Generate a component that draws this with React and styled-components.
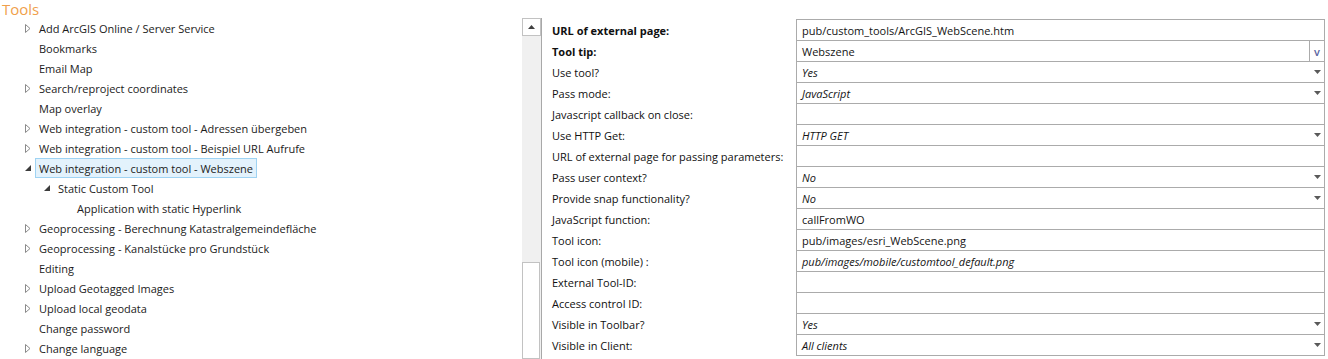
import React from "react";
import styled, { createGlobalStyle } from "styled-components";

const GlobalStyle = createGlobalStyle`
  html, body {
    margin: 0;
    padding: 0;
    background: #ffffff;
  }

  body {
    font-family: "Segoe UI", "Open Sans", "Noto Sans", sans-serif;
    font-size: 11px;
    color: #1b1b1b;
  }
`;

const Page = styled.div`
  width: 1328px;
  height: 359px;
  overflow: hidden;

  display: flex;
  flex-direction: column;
`;

const Title = styled.div`
  height: 18px;
  padding-left: 2px;

  font-size: 15px;
  line-height: 18px;
  color: #f0a04b;
`;

const Body = styled.div`
  flex: 1;

  display: flex;
  min-height: 0;
`;

const TreePane = styled.div`
  width: 522px;

  display: flex;
  flex-direction: column;
`;

const TreeRow = styled.div`
  height: 20px;
  padding-left: ${(p) => 20 + p.$level * 19}px;

  display: flex;
  align-items: center;
`;

const Expander = styled.span`
  width: 15px;
  height: 20px;

  display: flex;
  align-items: center;
  justify-content: flex-start;
  padding-left: 5px;
  box-sizing: border-box;
`;

const TreeLabel = styled.span`
  height: 18px;
  padding: 0 3px;

  display: flex;
  align-items: center;

  border: 1px solid ${(p) => (p.$selected ? "#9fd3f3" : "transparent")};
  background-color: ${(p) => (p.$selected ? "#e3f2fc" : "transparent")};

  white-space: nowrap;
`;

const ScrollBar = styled.div`
  width: 19px;
  border-right: 1px solid #a8a8a8;

  display: flex;
  flex-direction: column;
`;

const ScrollButton = styled.div`
  height: 18px;
  box-sizing: border-box;

  border: 1px solid #c2c2c2;
  background-color: #ffffff;

  display: flex;
  align-items: center;
  justify-content: center;
`;

const ScrollTrack = styled.div`
  flex: 1;

  display: flex;
  flex-direction: column;

  background-color: #f0f0f0;
`;

const ScrollThumb = styled.div`
  flex: 1;
  margin-top: 226px;
  margin-right: 1px;

  border: 1px solid #c2c2c2;
  background-color: #ffffff;
`;

const Grid = styled.div`
  flex: 1;
  padding-top: 1px;
  padding-right: 3px;

  display: grid;
  grid-template-columns: 254px 1fr;
  align-content: start;
`;

const Label = styled.div`
  height: ${(p) => (p.$first ? 22 : 21)}px;
  padding-left: 10px;

  display: flex;
  align-items: center;

  font-weight: ${(p) => (p.$bold ? 700 : 400)};
  color: #101010;
  white-space: nowrap;
`;

const Value = styled.div`
  height: ${(p) => (p.$first ? 22 : 21)}px;
  box-sizing: border-box;

  display: flex;
  align-items: stretch;

  border: 1px solid #ababab;
  border-top-width: ${(p) => (p.$first ? 1 : 0)}px;
`;

const ValueText = styled.span`
  flex: 1;
  padding-left: 5px;

  display: flex;
  align-items: center;

  font-style: ${(p) => (p.$italic ? "italic" : "normal")};
  color: #141414;
  white-space: nowrap;
`;

const DropArrow = styled.span`
  width: 14px;

  display: flex;
  align-items: center;
  justify-content: center;
`;

const VButton = styled.span`
  width: 14px;
  border-left: 1px solid #ababab;

  display: flex;
  align-items: center;
  justify-content: center;

  font-size: 11px;
  font-weight: 600;
  color: #5a64a0;
`;

const Collapsed = () => (
  <svg width="6" height="9" viewBox="0 0 6 9">
    <path d="M0.5 0.5 L5 4.5 L0.5 8.5 Z" fill="none" stroke="#8a8a8a" strokeWidth="1" />
  </svg>
);

const Expanded = () => (
  <svg width="6" height="6" viewBox="0 0 6 6">
    <path d="M6 0 L6 6 L0 6 Z" fill="#3c3c3c" />
  </svg>
);

const Caret = () => (
  <svg width="7" height="4" viewBox="0 0 7 4">
    <path d="M0 0 L7 0 L3.5 4 Z" fill="#5a5a5a" />
  </svg>
);

const UpArrow = () => (
  <svg width="7" height="4" viewBox="0 0 7 4">
    <path d="M0 4 L7 4 L3.5 0 Z" fill="#404040" />
  </svg>
);

const treeItems = [
  { label: "Add ArcGIS Online / Server Service", level: 0, state: "closed" },
  { label: "Bookmarks", level: 0 },
  { label: "Email Map", level: 0 },
  { label: "Search/reproject coordinates", level: 0, state: "closed" },
  { label: "Map overlay", level: 0 },
  { label: "Web integration - custom tool - Adressen übergeben", level: 0, state: "closed" },
  { label: "Web integration - custom tool - Beispiel URL Aufrufe", level: 0, state: "closed" },
  { label: "Web integration - custom tool - Webszene", level: 0, state: "open", selected: true },
  { label: "Static Custom Tool", level: 1, state: "open" },
  { label: "Application with static Hyperlink", level: 2 },
  { label: "Geoprocessing - Berechnung Katastralgemeindefläche", level: 0, state: "closed" },
  { label: "Geoprocessing - Kanalstücke pro Grundstück", level: 0, state: "closed" },
  { label: "Editing", level: 0 },
  { label: "Upload Geotagged Images", level: 0, state: "closed" },
  { label: "Upload local geodata", level: 0, state: "closed" },
  { label: "Change password", level: 0 },
  { label: "Change language", level: 0, state: "closed" },
];

const properties = [
  { label: "URL of external page:", value: "pub/custom_tools/ArcGIS_WebScene.htm", bold: true },
  { label: "Tool tip:", value: "Webszene", bold: true, editor: "v" },
  { label: "Use tool?", value: "Yes", italic: true, editor: "drop" },
  { label: "Pass mode:", value: "JavaScript", italic: true, editor: "drop" },
  { label: "Javascript callback on close:", value: "" },
  { label: "Use HTTP Get:", value: "HTTP GET", italic: true, editor: "drop" },
  { label: "URL of external page for passing parameters:", value: "" },
  { label: "Pass user context?", value: "No", italic: true, editor: "drop" },
  { label: "Provide snap functionality?", value: "No", italic: true, editor: "drop" },
  { label: "JavaScript function:", value: "callFromWO" },
  { label: "Tool icon:", value: "pub/images/esri_WebScene.png" },
  { label: "Tool icon (mobile) :", value: "pub/images/mobile/customtool_default.png", italic: true },
  { label: "External Tool-ID:", value: "" },
  { label: "Access control ID:", value: "" },
  { label: "Visible in Toolbar?", value: "Yes", italic: true, editor: "drop" },
  { label: "Visible in Client:", value: "All clients", italic: true, editor: "drop" },
];

const App = () => {
  return (
    <Page>
      <GlobalStyle />
      <Title>Tools</Title>
      <Body>
        <TreePane>
          {treeItems.map((item) => (
            <TreeRow key={item.label} $level={item.level}>
              <Expander>
                {item.state === "closed" && <Collapsed />}
                {item.state === "open" && <Expanded />}
              </Expander>
              <TreeLabel $selected={item.selected}>{item.label}</TreeLabel>
            </TreeRow>
          ))}
        </TreePane>

        <ScrollBar>
          <ScrollButton>
            <UpArrow />
          </ScrollButton>
          <ScrollTrack>
            <ScrollThumb />
          </ScrollTrack>
        </ScrollBar>

        <Grid>
          {properties.map((prop, i) => (
            <React.Fragment key={prop.label}>
              <Label $bold={prop.bold} $first={i === 0}>
                {prop.label}
              </Label>
              <Value $first={i === 0}>
                <ValueText $italic={prop.italic}>{prop.value}</ValueText>
                {prop.editor === "drop" && (
                  <DropArrow>
                    <Caret />
                  </DropArrow>
                )}
                {prop.editor === "v" && <VButton>v</VButton>}
              </Value>
            </React.Fragment>
          ))}
        </Grid>
      </Body>
    </Page>
  );
};

export default App;
